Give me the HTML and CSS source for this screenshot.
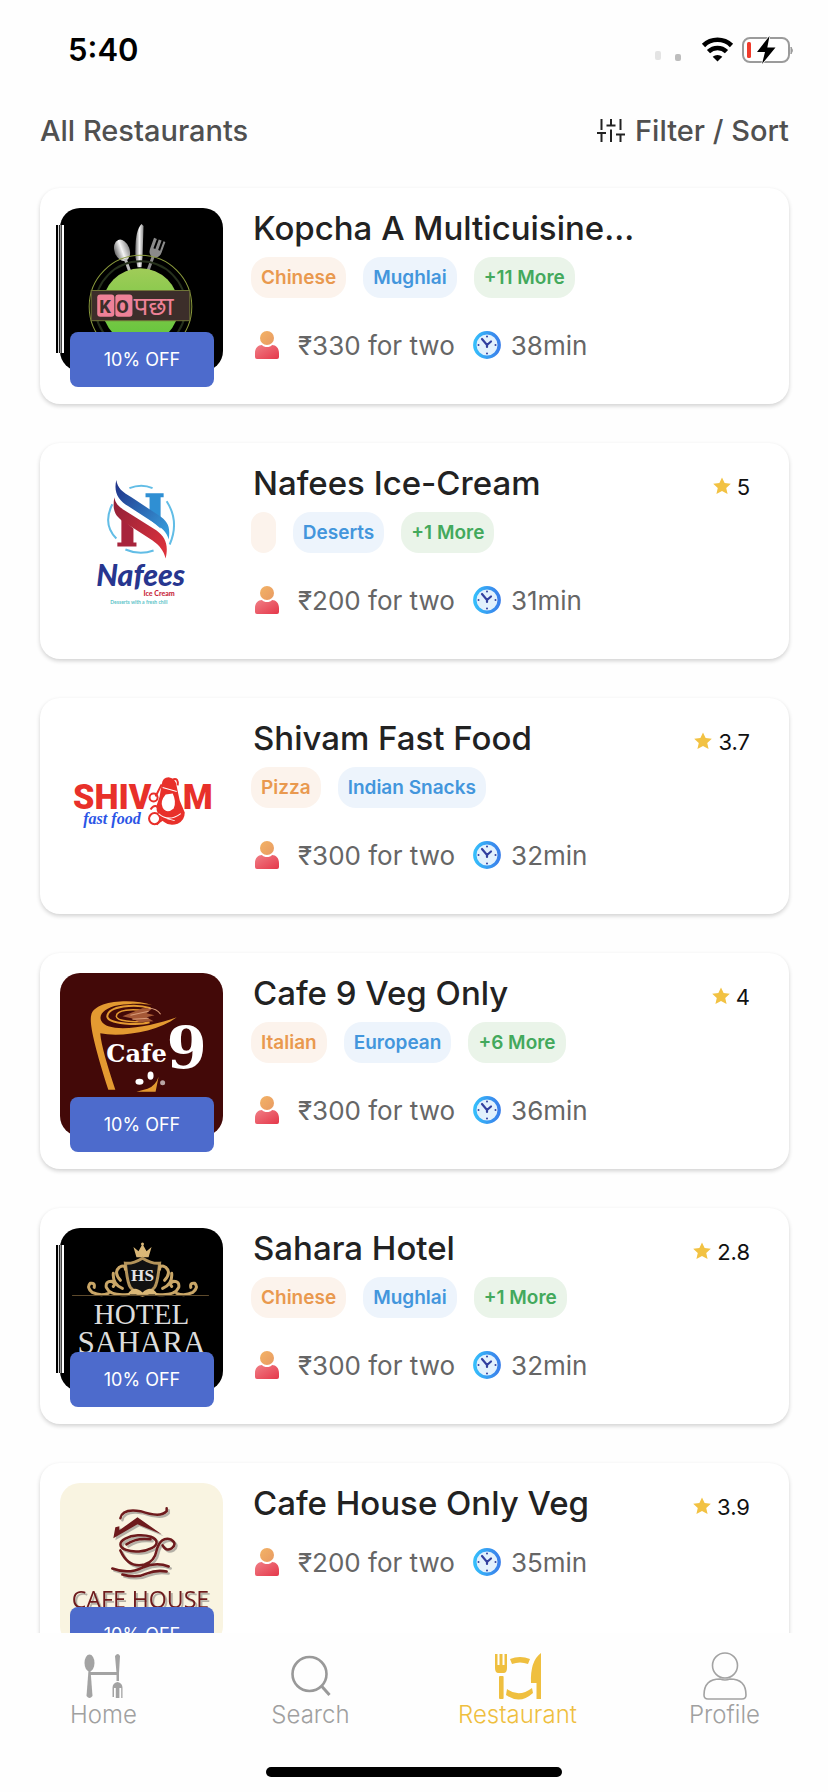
FILE: index.html
```html
<!DOCTYPE html>
<html lang="en">
<head>
<meta charset="utf-8">
<meta name="viewport" content="width=device-width, initial-scale=1">
<title>All Restaurants</title>
<link rel="stylesheet" href="styles.css">
</head>
<body>
<svg class="defs" width="0" height="0" aria-hidden="true">
  <defs>
    <linearGradient id="g-body" x1="0" y1="0" x2="1" y2="1"><stop offset="0" stop-color="#f07f86"/><stop offset="1" stop-color="#e5374a"/></linearGradient>
    <linearGradient id="g-head" x1="0" y1="0" x2="1" y2="1"><stop offset="0" stop-color="#f3b366"/><stop offset="1" stop-color="#e89a62"/></linearGradient>
    <linearGradient id="g-clock" x1="0" y1="0" x2="1" y2="0"><stop offset="0" stop-color="#35bdfb"/><stop offset="1" stop-color="#3a7fea"/></linearGradient>
    <linearGradient id="g-green" x1="0" y1="0" x2="0" y2="1"><stop offset="0" stop-color="#a0cc58"/><stop offset="1" stop-color="#5fc53a"/></linearGradient>
    <linearGradient id="g-steel" x1="0" y1="0" x2="1" y2="0"><stop offset="0" stop-color="#6d6d6d"/><stop offset=".5" stop-color="#f5f5f5"/><stop offset="1" stop-color="#8b8b8b"/></linearGradient>
    <linearGradient id="g-blue" x1="0" y1="0" x2="1" y2="1"><stop offset="0" stop-color="#1f2f86"/><stop offset="1" stop-color="#39a5e2"/></linearGradient>
    <linearGradient id="g-red" x1="0" y1="0" x2="1" y2="1"><stop offset="0" stop-color="#8e2038"/><stop offset="1" stop-color="#e2333c"/></linearGradient>
    <symbol id="i-person" viewBox="0 0 24 28"><circle cx="12" cy="7" r="7" fill="url(#g-head)"/><path d="M0 26v-4c0-5 3-8 7-8 1 1.400 3 2 5 2s4-.6 5-2c4 0 7 3 7 8v4q0 2-2 2H2q-2 0-2-2z" fill="url(#g-body)"/></symbol>
    <symbol id="i-clock" viewBox="0 0 28 28"><circle cx="14" cy="14" r="12.200" fill="#e3f1fd" stroke="url(#g-clock)" stroke-width="3.400"/><path d="M9 8l5 6 4-3.500M14 14v2" fill="none" stroke="#33409f" stroke-width="2.200" stroke-linecap="round"/><g fill="#33409f"><circle cx="14" cy="5.500" r="1"/><circle cx="14" cy="22.500" r="1"/><circle cx="5.500" cy="14" r="1"/><circle cx="22.500" cy="14" r="1"/></g></symbol>
    <symbol id="i-star" viewBox="0 0 20 19"><path d="M10 0l2.900 6.300 6.900.7-5.100 4.600 1.500 6.900L10 15l-6.200 3.500 1.500-6.900L.2 7l6.900-.7z" fill="#f2c243"/></symbol>
  </defs>
</svg>

<div class="app">
  <header class="status">
    <span class="time">5:40</span>
    <svg class="status-icons" width="142" height="28" viewBox="0 0 142 28" aria-label="Wi-Fi on, battery charging" role="img">
      <rect x="2" y="15" width="6" height="9" rx="2" fill="#e4e4e4"/>
      <rect x="22" y="18" width="6" height="7" rx="2" fill="#bdbdbd"/>
      <g fill="none" stroke="#000" stroke-width="4.600"><path d="M50.500 9.500a20 20 0 0 1 28 0"/><path d="M55.500 15.600a13 13 0 0 1 18 0"/></g>
      <path d="M64.500 25.500l-4.800-4.700a7 7 0 0 1 9.600 0z" fill="#000"/>
      <rect x="90" y="2" width="46" height="24" rx="7" fill="#fff" stroke="#9b9b9b" stroke-width="2"/>
      <path d="M138 11q3 3.500 0 7z" fill="#9b9b9b" stroke="#9b9b9b"/>
      <rect x="94" y="6" width="4" height="16" rx="1.500" fill="#f03b2c"/>
      <path d="M116.500 0L104 16h8l-3 12L122.500 11.500h-8.200z" fill="#000" stroke="#fff" stroke-width="1.500" paint-order="stroke"/>
    </svg>
  </header>

  <div class="toolbar">
    <h1 class="heading">All Restaurants</h1>
    <button class="filter" type="button">
      <svg width="28" height="24" viewBox="0 0 28 24" fill="none" stroke="#222" stroke-width="2" aria-hidden="true"><path d="M4.500 0v11M4.500 14.500V23M0 14h9M14 0v6.500M14 10.500V23M9.500 6.500h9M23.500 0v11M23.500 16V23M19 15.500h9"/></svg>
      Filter / Sort
    </button>
  </div>

  <main class="list">
    <article class="card">
      <div class="thumb">
        <svg class="logo" viewBox="0 0 162 162" role="img" aria-label="Kopcha logo">
          <rect width="162" height="162" fill="#000"/>
          <g transform="rotate(-20 62 43)"><ellipse cx="62" cy="42" rx="7.500" ry="11" fill="url(#g-steel)"/><rect x="60.500" y="51" width="3" height="14" fill="#bbb"/></g>
          <path d="M77 59l-2-10q-1-26 6-33l2 2-1 31-1 10z" fill="url(#g-steel)"/>
          <g transform="rotate(20 95 43)"><path d="M89 31v11q0 6 4 7v14h3V49q5-1 5-7V31h-2v10h-2V31h-3v10h-2V31z" fill="#8a8a8a"/></g>
          <circle cx="80" cy="98" r="51" fill="none" stroke="#8a9a3c"/>
          <circle cx="80" cy="98" r="45" fill="none" stroke="#25301c" stroke-width="2"/>
          <circle cx="80" cy="98" r="38" fill="url(#g-green)"/>
          <rect x="31" y="82" width="98" height="30" fill="#3c2e2a" stroke="#6f7438"/>
          <rect x="37" y="86" width="17" height="22" rx="3" fill="#ee8197"/><rect x="55" y="86" width="17" height="22" rx="3" fill="#ee8197"/>
          <text class="kop-box" x="39" y="104">K</text><text class="kop-box" x="56" y="104">O</text>
          <text class="kop-hi" x="73" y="106">पछा</text>
        </svg>
        <span class="glitch"></span>
        <span class="offer">10% OFF</span>
      </div>
      <div class="info">
        <div class="title-row"><h2 class="title">Kopcha A Multicuisine...</h2></div>
        <div class="chips"><span class="chip orange">Chinese</span><span class="chip blue">Mughlai</span><span class="chip green">+11 More</span></div>
        <div class="meta"><svg class="person"><use href="#i-person"/></svg><span class="cost">₹330 for two</span><svg class="clock"><use href="#i-clock"/></svg><span>38min</span></div>
      </div>
    </article>

    <article class="card">
      <div class="thumb">
        <svg class="logo" viewBox="0 0 162 162" role="img" aria-label="Nafees Ice Cream logo">
          <rect width="162" height="162" fill="#fff"/>
          <g fill="none" stroke="#62bde6" stroke-width="2"><path d="M69 25q12-5 23 0M106 38q13 20 3 43M65 86q14 6 28 1M52 41q-10 20 4 34"/></g>
          <path d="M85 30h18v4h-3v31L89 56V34h-4z" fill="#2f8fd3"/>
          <path d="M61 55l12 10v14h3v4H57v-4h4z" fill="#a8243c"/>
          <path d="M56 17c-3 12 2 20 12 26l26 17c8 5 12 9 14 16 2-13-1-18-10-24L71 34C62 29 57 25 56 17z" fill="url(#g-blue)"/>
          <path d="M54 34c-2 13 0 18 10 25l28 18c7 5 11 10 13 18 3-14 0-21-9-28L64 47c-6-4-9-7-10-13z" fill="url(#g-red)"/>
          <text class="naf-name" x="36" y="122">Nafees</text>
          <text class="naf-sub" x="83" y="132">Ice Cream</text>
          <text class="naf-tag" x="50" y="140">Desserts with a fresh chill</text>
        </svg>
      </div>
      <div class="info">
        <div class="title-row"><h2 class="title">Nafees Ice-Cream</h2><span class="rating"><svg class="star"><use href="#i-star"/></svg>5</span></div>
        <div class="chips"><span class="chip orange">&nbsp;</span><span class="chip blue">Deserts</span><span class="chip green">+1 More</span></div>
        <div class="meta"><svg class="person"><use href="#i-person"/></svg><span class="cost">₹200 for two</span><svg class="clock"><use href="#i-clock"/></svg><span>31min</span></div>
      </div>
    </article>

    <article class="card">
      <div class="thumb">
        <svg class="logo" viewBox="0 0 162 162" role="img" aria-label="Shivam Fast Food logo">
          <rect width="162" height="162" fill="#fff"/>
          <text class="shiv" x="13" y="90">SHIV</text><text class="shiv" x="122" y="90">M</text>
          <g fill="#e8302a"><path fill-rule="evenodd" d="M101 66q1-7 7-7 7 1 8 9l3 14 5 12q0 8-7 11-8 3-14-2-8-8-7-16l3-9zM105 76q-6 7-3 13 4 7 11 1 3-7-1-15z"/></g>
          <g fill="none" stroke="#e8302a" stroke-width="2"><circle cx="93" cy="79" r="4"/><circle cx="94" cy="100" r="5.500"/><path d="M90 91q5-8 10 2M96 106q8-10 20-4M101 66l-6 12M112 61q6-2 5 6"/></g>
          <g fill="none" stroke="#fff" stroke-width="1"><path d="M102 69l14 4M98 95q10 9 22 0M106 100l8 2"/></g>
          <text class="fast" x="23" y="105">fast food</text>
        </svg>
      </div>
      <div class="info">
        <div class="title-row"><h2 class="title">Shivam Fast Food</h2><span class="rating"><svg class="star"><use href="#i-star"/></svg>3.7</span></div>
        <div class="chips"><span class="chip orange">Pizza</span><span class="chip blue">Indian Snacks</span></div>
        <div class="meta"><svg class="person"><use href="#i-person"/></svg><span class="cost">₹300 for two</span><svg class="clock"><use href="#i-clock"/></svg><span>32min</span></div>
      </div>
    </article>

    <article class="card">
      <div class="thumb">
        <svg class="logo" viewBox="0 0 162 162" role="img" aria-label="Cafe 9 logo">
          <rect width="162" height="162" fill="#430908"/>
          <path d="M92 32C72 25 34 27 31 42c-2 8 3 30 17 74h7C47 92 41 72 40 60c20 4 56-1 76-16-22 8-52 14-68 9-14-6-8-18 10-21 14-2 24-2 34 0z" fill="#e49a31"/>
          <path d="M90 35c-16-5-42-2-43 8 0 8 32 9 42 6" fill="none" stroke="#e49a31" stroke-width="2"/>
          <path d="M84 38c-12-3-28-1-28 5 0 5 18 6 26 5" fill="none" stroke="#e49a31" stroke-width="1.500"/>
          <path d="M62 43l20-8 10 0-6 5 8 2-8 2 7 4-14 1-8-4z" fill="#a55836"/><path d="M70 42l18-4M72 46l16-1M88 35q8 0 12 6" stroke="#d79a78" fill="none"/>
          <text class="c9-name" x="46" y="88">Cafe</text><text class="c9-nine" x="106" y="94">9</text>
          <path d="M76 118h19l3-15q-3 9-11 12z" fill="#e49a31"/>
          <ellipse cx="79" cy="108" rx="4" ry="3" fill="#fff"/><ellipse cx="90" cy="102" rx="3" ry="4" fill="#fff"/><circle cx="102" cy="109" r="2.500" fill="#b9a5a4"/>
        </svg>
        <span class="offer">10% OFF</span>
      </div>
      <div class="info">
        <div class="title-row"><h2 class="title">Cafe 9 Veg Only</h2><span class="rating"><svg class="star"><use href="#i-star"/></svg>4</span></div>
        <div class="chips"><span class="chip orange">Italian</span><span class="chip blue">European</span><span class="chip green">+6 More</span></div>
        <div class="meta"><svg class="person"><use href="#i-person"/></svg><span class="cost">₹300 for two</span><svg class="clock"><use href="#i-clock"/></svg><span>36min</span></div>
      </div>
    </article>

    <article class="card">
      <div class="thumb">
        <svg class="logo" viewBox="0 0 162 162" role="img" aria-label="Hotel Sahara logo">
          <rect width="162" height="162" fill="#000"/>
          <path d="M76 29l-3-10 5 4 4-7 4 7 5-4-3 10z" fill="#d9b777"/><circle cx="82" cy="16" r="1.500" fill="#d9b777"/>
          <path d="M82 30q10 6 17 5-2 20-5 24-5 6-12 8-7-2-12-8-3-4-5-24 7 1 17-5z" fill="#111" stroke="#b3935a" stroke-width="3"/>
          <g fill="none" stroke="#c9a667" stroke-width="3" stroke-linecap="round">
            <g id="scroll"><path d="M68 66q-18 2-22-7-1-6 5-6 5 2 2 5M48 65q-8 3-16-1-6-5-2-9 5-1 4 4M62 60q-10-4-9-15M60 52q-7-8-1-13 6-3 6 2"/></g>
            <use href="#scroll" transform="matrix(-1 0 0 1 164 0)"/>
          </g>
          <path d="M67 66q6-10 15-2 9-8 15 2z" fill="#d9b777"/>
          <path d="M12 67h136" stroke="#5d4a2c"/>
          <text class="hs" x="82" y="53">HS</text>
          <text class="hotel" x="81" y="95">HOTEL</text><text class="sahara" x="81" y="124">SAHARA</text>
        </svg>
        <span class="glitch"></span>
        <span class="offer">10% OFF</span>
      </div>
      <div class="info">
        <div class="title-row"><h2 class="title">Sahara Hotel</h2><span class="rating"><svg class="star"><use href="#i-star"/></svg>2.8</span></div>
        <div class="chips"><span class="chip orange">Chinese</span><span class="chip blue">Mughlai</span><span class="chip green">+1 More</span></div>
        <div class="meta"><svg class="person"><use href="#i-person"/></svg><span class="cost">₹300 for two</span><svg class="clock"><use href="#i-clock"/></svg><span>32min</span></div>
      </div>
    </article>

    <article class="card">
      <div class="thumb">
        <svg class="logo" viewBox="0 0 162 162" role="img" aria-label="Cafe House logo">
          <rect width="162" height="162" fill="#f9f4e1"/>
          <g class="cup" fill="none" stroke="#6e1a1c" stroke-width="2.500" stroke-linecap="round">
            <path d="M60 35q2-10 20-7 20 7 26 0V25M60 67q8 18 24 14 10-3 12-14 4-14 14-11 7 4 1 9-6 3-9-3M52 85q16 6 30-1 14-6 26-1M62 91q14 4 24-1 10-4 20-2"/><ellipse cx="78" cy="60" rx="18" ry="8" transform="rotate(-4 78 60)"/><path d="M66 61q10-7 24-5"/>
            <path d="M53 55l2-11 4-1v4l18-13 24 17-24-10z" fill="#6e1a1c" stroke="none"/>
          </g>
          <text class="ch" x="80" y="124">CAFE HOUSE</text>
        </svg>
        <span class="offer">10% OFF</span>
      </div>
      <div class="info">
        <div class="title-row"><h2 class="title">Cafe House Only Veg</h2><span class="rating"><svg class="star"><use href="#i-star"/></svg>3.9</span></div>
        <div class="meta"><svg class="person"><use href="#i-person"/></svg><span class="cost">₹200 for two</span><svg class="clock"><use href="#i-clock"/></svg><span>35min</span></div>
      </div>
    </article>
  </main>

  <nav class="tabs">
    <a class="tab" href="#home">
      <svg width="40" height="48" viewBox="0 0 40 48" fill="#a3a3a3" aria-hidden="true"><ellipse cx="5.500" cy="11" rx="5" ry="8.500"/><path d="M4.500 18h2l2 26q-3 4-6 0z"/><rect x="5" y="20" width="29" height="3"/><path d="M31 4q3-4 5 0l-1 17v8h-2.500v-8z"/><path d="M28.500 45V36q0-5 5-6 5 1 5 6v10h-1.300V36h-1.800v10h-3.600V36H30v9z"/></svg>
      Home
    </a>
    <a class="tab" href="#search">
      <svg width="40" height="48" viewBox="0 0 40 48" fill="none" stroke="#999" stroke-width="2.600" aria-hidden="true"><circle cx="18.500" cy="22" r="17"/><path d="M30.500 34l8 9" stroke-width="3"/></svg>
      Search
    </a>
    <a class="tab active" href="#restaurant">
      <svg width="48" height="48" viewBox="0 0 48 48" fill="#efbf3f" aria-hidden="true"><path d="M1 2h2.500v11h2V2h3v11h2V2H13v14q0 5-3.500 5H4.500Q1 21 1 16z"/><rect x="5" y="24" width="4.600" height="23" rx="1"/><path d="M16 7q10-4 20 0l-2 5q-8-3-16 0zM13 37q12 9 25-1l1 5q-13 12-27 2z"/><path d="M47 1v46h-4.500V31h-5.500q-1-22 10-30z"/></svg>
      Restaurant
    </a>
    <a class="tab" href="#profile">
      <svg width="46" height="48" viewBox="0 0 46 48" fill="none" stroke="#a3a3a3" stroke-width="1.600" aria-hidden="true"><circle cx="23" cy="13.500" r="12.500"/><path d="M18 27q5 2 10 0 16 0 16 16 0 4-4 4H6q-4 0-4-4 0-16 16-16z"/></svg>
      Profile
    </a>
  </nav>
  <div class="home-bar"></div>
</div>
</body>
</html>
```
FILE: styles.css
```css
* { box-sizing: border-box; }

body {
  margin: 0;
  background: #fefefe;
  font-family: Inter, "Noto Sans", sans-serif;
  color: #222;
}

.defs { position: absolute; }

.app {
  display: flex;
  flex-direction: column;
  height: 100vh;
}

.status {
  display: flex;
  align-items: center;
  justify-content: space-between;
  height: 99px;
  padding: 0 33px 0 68px;
}

.time { font-size: 31px; font-weight: 600; color: #000; }

.toolbar {
  display: flex;
  align-items: center;
  justify-content: space-between;
  height: 64px;
  padding: 0 39px 0 40px;
}

.heading,
.filter {
  margin: 0;
  font-family: inherit;
  font-size: 29px;
  font-weight: 500;
  line-height: 36px;
  color: #505050;
}

.filter {
  display: flex;
  align-items: center;
  gap: 10px;
  padding: 0;
  border: 0;
  background: none;
}

.list {
  display: flex;
  flex: 1;
  flex-direction: column;
  gap: 39px;
  min-height: 0;
  padding: 25px 39px 0 40px;
  overflow: hidden;
}

.card {
  display: flex;
  flex: none;
  gap: 28px;
  height: 216px;
  padding: 20px 39px 0 20px;
  border-radius: 20px;
  background: #fff;
  box-shadow: 0 2px 4px rgba(0, 0, 0, 0.18);
}

.thumb {
  position: relative;
  flex: none;
  width: 163px;
  height: 163px;
}

.logo {
  display: block;
  width: 100%;
  height: 100%;
  border-radius: 20px;
}

.offer {
  position: absolute;
  top: 124px;
  left: 10px;
  width: 144px;
  border-radius: 8px;
  background: #4d6bcc;
  color: #fff;
  font-size: 18px;
  line-height: 55px;
  text-align: center;
}

.glitch {
  position: absolute;
  top: 17px;
  left: -4px;
  width: 8px;
  height: 128px;
  background: linear-gradient(90deg, #000 0 2px, #ddd 2px 3px, #222 3px 4px, #999 4px 5px, #444 5px 6px, #fff 6px 8px);
}

.info { flex: 1; min-width: 0; }

.title-row {
  display: flex;
  align-items: baseline;
  justify-content: space-between;
  padding-left: 2px;
}

.title {
  margin: 0;
  font-size: 33px;
  font-weight: 500;
  line-height: 40px;
  white-space: nowrap;
}

.rating {
  display: flex;
  align-items: baseline;
  gap: 6px;
  color: #111;
  font-size: 22px;
}

.star { width: 18px; height: 18px; }

.chips { display: flex; gap: 17px; margin: 9px 0 33px; }

.chip {
  padding: 0 10px;
  border-radius: 18px;
  font-size: 19px;
  font-weight: 600;
  line-height: 41px;
  white-space: nowrap;
}

.orange { background: #fcf3ec; color: #e9994f; }
.blue { background: #edf4fc; color: #4396dc; }
.green { background: #eaf4e9; color: #43a95c; }

.meta {
  display: flex;
  align-items: center;
  height: 28px;
  margin-top: 25px;
  padding-left: 4px;
  color: #666;
  font-size: 26px;
  white-space: nowrap;
}

.person { width: 24px; height: 28px; margin-right: 19px; }
.clock { width: 28px; height: 28px; margin: 0 10px 0 18px; }

.tabs {
  display: grid;
  grid-template-columns: repeat(4, 1fr);
  height: 118px;
  padding-top: 19px;
}

.tab {
  display: flex;
  flex-direction: column;
  align-items: center;
  gap: 2px;
  color: #a0a0a0;
  font-size: 24px;
  font-weight: 300;
  line-height: 26px;
  text-decoration: none;
}

.active { color: #efbf3f; }

.home-bar {
  flex: none;
  align-self: center;
  width: 296px;
  height: 10px;
  margin: 16px 0 15px;
  border-radius: 5px;
  background: #000;
}

.kop-box { font: 800 18px Roboto, sans-serif; fill: #3c2e2a; }
.kop-hi { font: 400 26px "Noto Sans", sans-serif; fill: #ee8197; }
.naf-name { font: italic 900 30px Lato, sans-serif; fill: #27368f; }
.naf-sub { font: 900 7px Lato, sans-serif; fill: #c8283c; }
.naf-tag { font: 700 5px Lato, sans-serif; fill: #5cc4c8; }
.shiv { font: 900 34px Roboto, sans-serif; fill: #e8302a; }
.fast { font: italic 700 16px "Liberation Serif", serif; fill: #2b55e6; }
.c9-name { font: 700 24px "DejaVu Serif", serif; fill: #fff; }
.c9-nine { font: 700 57px "DejaVu Serif", serif; fill: #fff; }
.hs { font: 700 17px "Liberation Serif", serif; fill: #e4e4e4; text-anchor: middle; }
.hotel { font: 29px "Liberation Serif", serif; fill: #dcdcdc; text-anchor: middle; }
.sahara { font: 31px "Liberation Serif", serif; fill: #dcdcdc; text-anchor: middle; }
.ch { font: 400 23px "Open Sans", sans-serif; fill: #6e1a1c; text-anchor: middle; }
.ch, .cup { filter: drop-shadow(2px 2px 0 #b4b0a6); }
```
